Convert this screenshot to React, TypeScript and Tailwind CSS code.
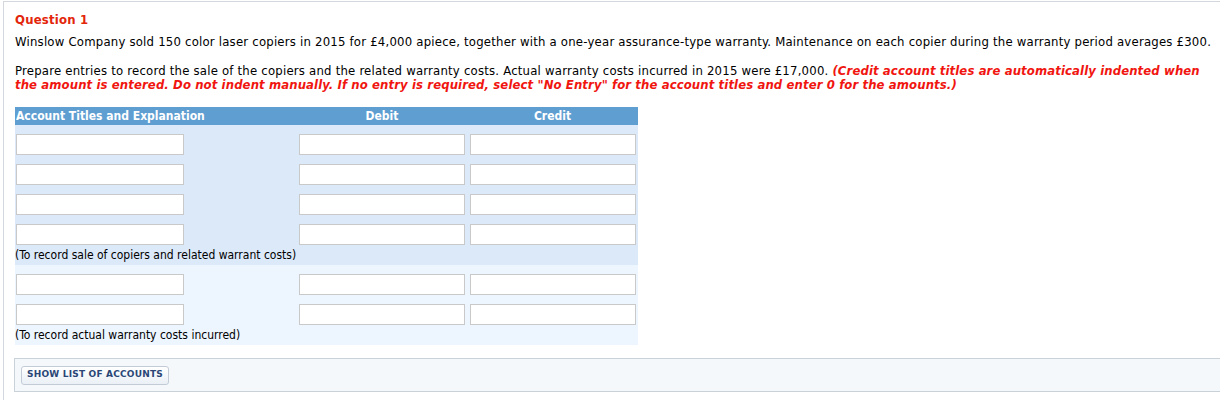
import React from 'react';

const verdana = { fontFamily: '"DejaVu Sans Condensed", "DejaVu Sans", Verdana, sans-serif' };

function Field({ className = '' }: { className?: string }) {
  return <div className={`h-[21px] bg-white border border-[#c9c9c9] ${className}`} />;
}

function EntryRow() {
  return (
    <div className="grid grid-cols-[282px_170px_171px] h-[30px] items-start pt-[9px]">
      <div className="pl-px">
        <Field className="w-[168px]" />
      </div>
      <div className="pl-[2px] pr-[2px]">
        <Field />
      </div>
      <div className="pl-[3px] pr-[2px]">
        <Field />
      </div>
    </div>
  );
}

function Block({ rows, note, bg }: { rows: number; note: string; bg: string }) {
  return (
    <div className={bg}>
      {Array.from({ length: rows }).map((_, i) => (
        <EntryRow key={i} />
      ))}
      <div className="text-[12px] leading-[15px] text-black pt-[3px] pb-[2px]">{note}</div>
    </div>
  );
}

export default function App() {
  return (
    <div className="w-[1220px] h-[400px] bg-white overflow-hidden">
      <div className="ml-[3px] mt-px border-l border-t border-[#d3d8de] h-[399px] pl-[11px] pt-[10px]" style={verdana}>
        <div className="text-[13px] leading-[16px] font-bold text-[#e3260b] tracking-[0.2px]">Question 1</div>
        <p className="text-[13px] leading-[16px] text-black mt-[6px] whitespace-nowrap tracking-[0.21px]">
          Winslow Company sold 150 color laser copiers in 2015 for £4,000 apiece, together with a one-year assurance-type warranty. Maintenance on each copier during the warranty period averages £300.
        </p>
        <p className="text-[13px] leading-[14px] text-black mt-[14px] whitespace-nowrap tracking-[0.21px]">
          Prepare entries to record the sale of the copiers and the related warranty costs. Actual warranty costs incurred in 2015 were £17,000.{' '}
          <span className="font-bold italic text-[#f0150f] tracking-[0.1px]">
            (Credit account titles are automatically indented when
            <br />
            the amount is entered. Do not indent manually. If no entry is required, select "No Entry" for the account titles and enter 0 for the amounts.)
          </span>
        </p>

        <div className="w-[623px] mt-[15px]">
          <div className="grid grid-cols-[282px_170px_171px] h-[18px] bg-[#5e9ed1] text-white font-bold text-[12px] leading-[18px]">
            <div className="pl-px">Account Titles and Explanation</div>
            <div className="text-center">Debit</div>
            <div className="text-center">Credit</div>
          </div>
          <Block rows={4} note="(To record sale of copiers and related warrant costs)" bg="bg-[#dce9f8]" />
          <Block rows={2} note="(To record actual warranty costs incurred)" bg="bg-[#edf5fe]" />
        </div>

        <div className="mt-[13px] -ml-px h-[34px] border border-r-0 border-[#c9d1d9] bg-[#f4f8fb] flex items-center pl-[6px]">
          <button
            className="h-[19px] px-[5px] rounded-[3px] border border-[#c3ccd6] bg-gradient-to-b from-white to-[#eaf0f6] text-[9px] font-bold text-[#2a4677] tracking-[0.2px]"
            style={{ fontFamily: '"DejaVu Sans", Verdana, sans-serif' }}
          >
            SHOW LIST OF ACCOUNTS
          </button>
        </div>
      </div>
    </div>
  );
}
